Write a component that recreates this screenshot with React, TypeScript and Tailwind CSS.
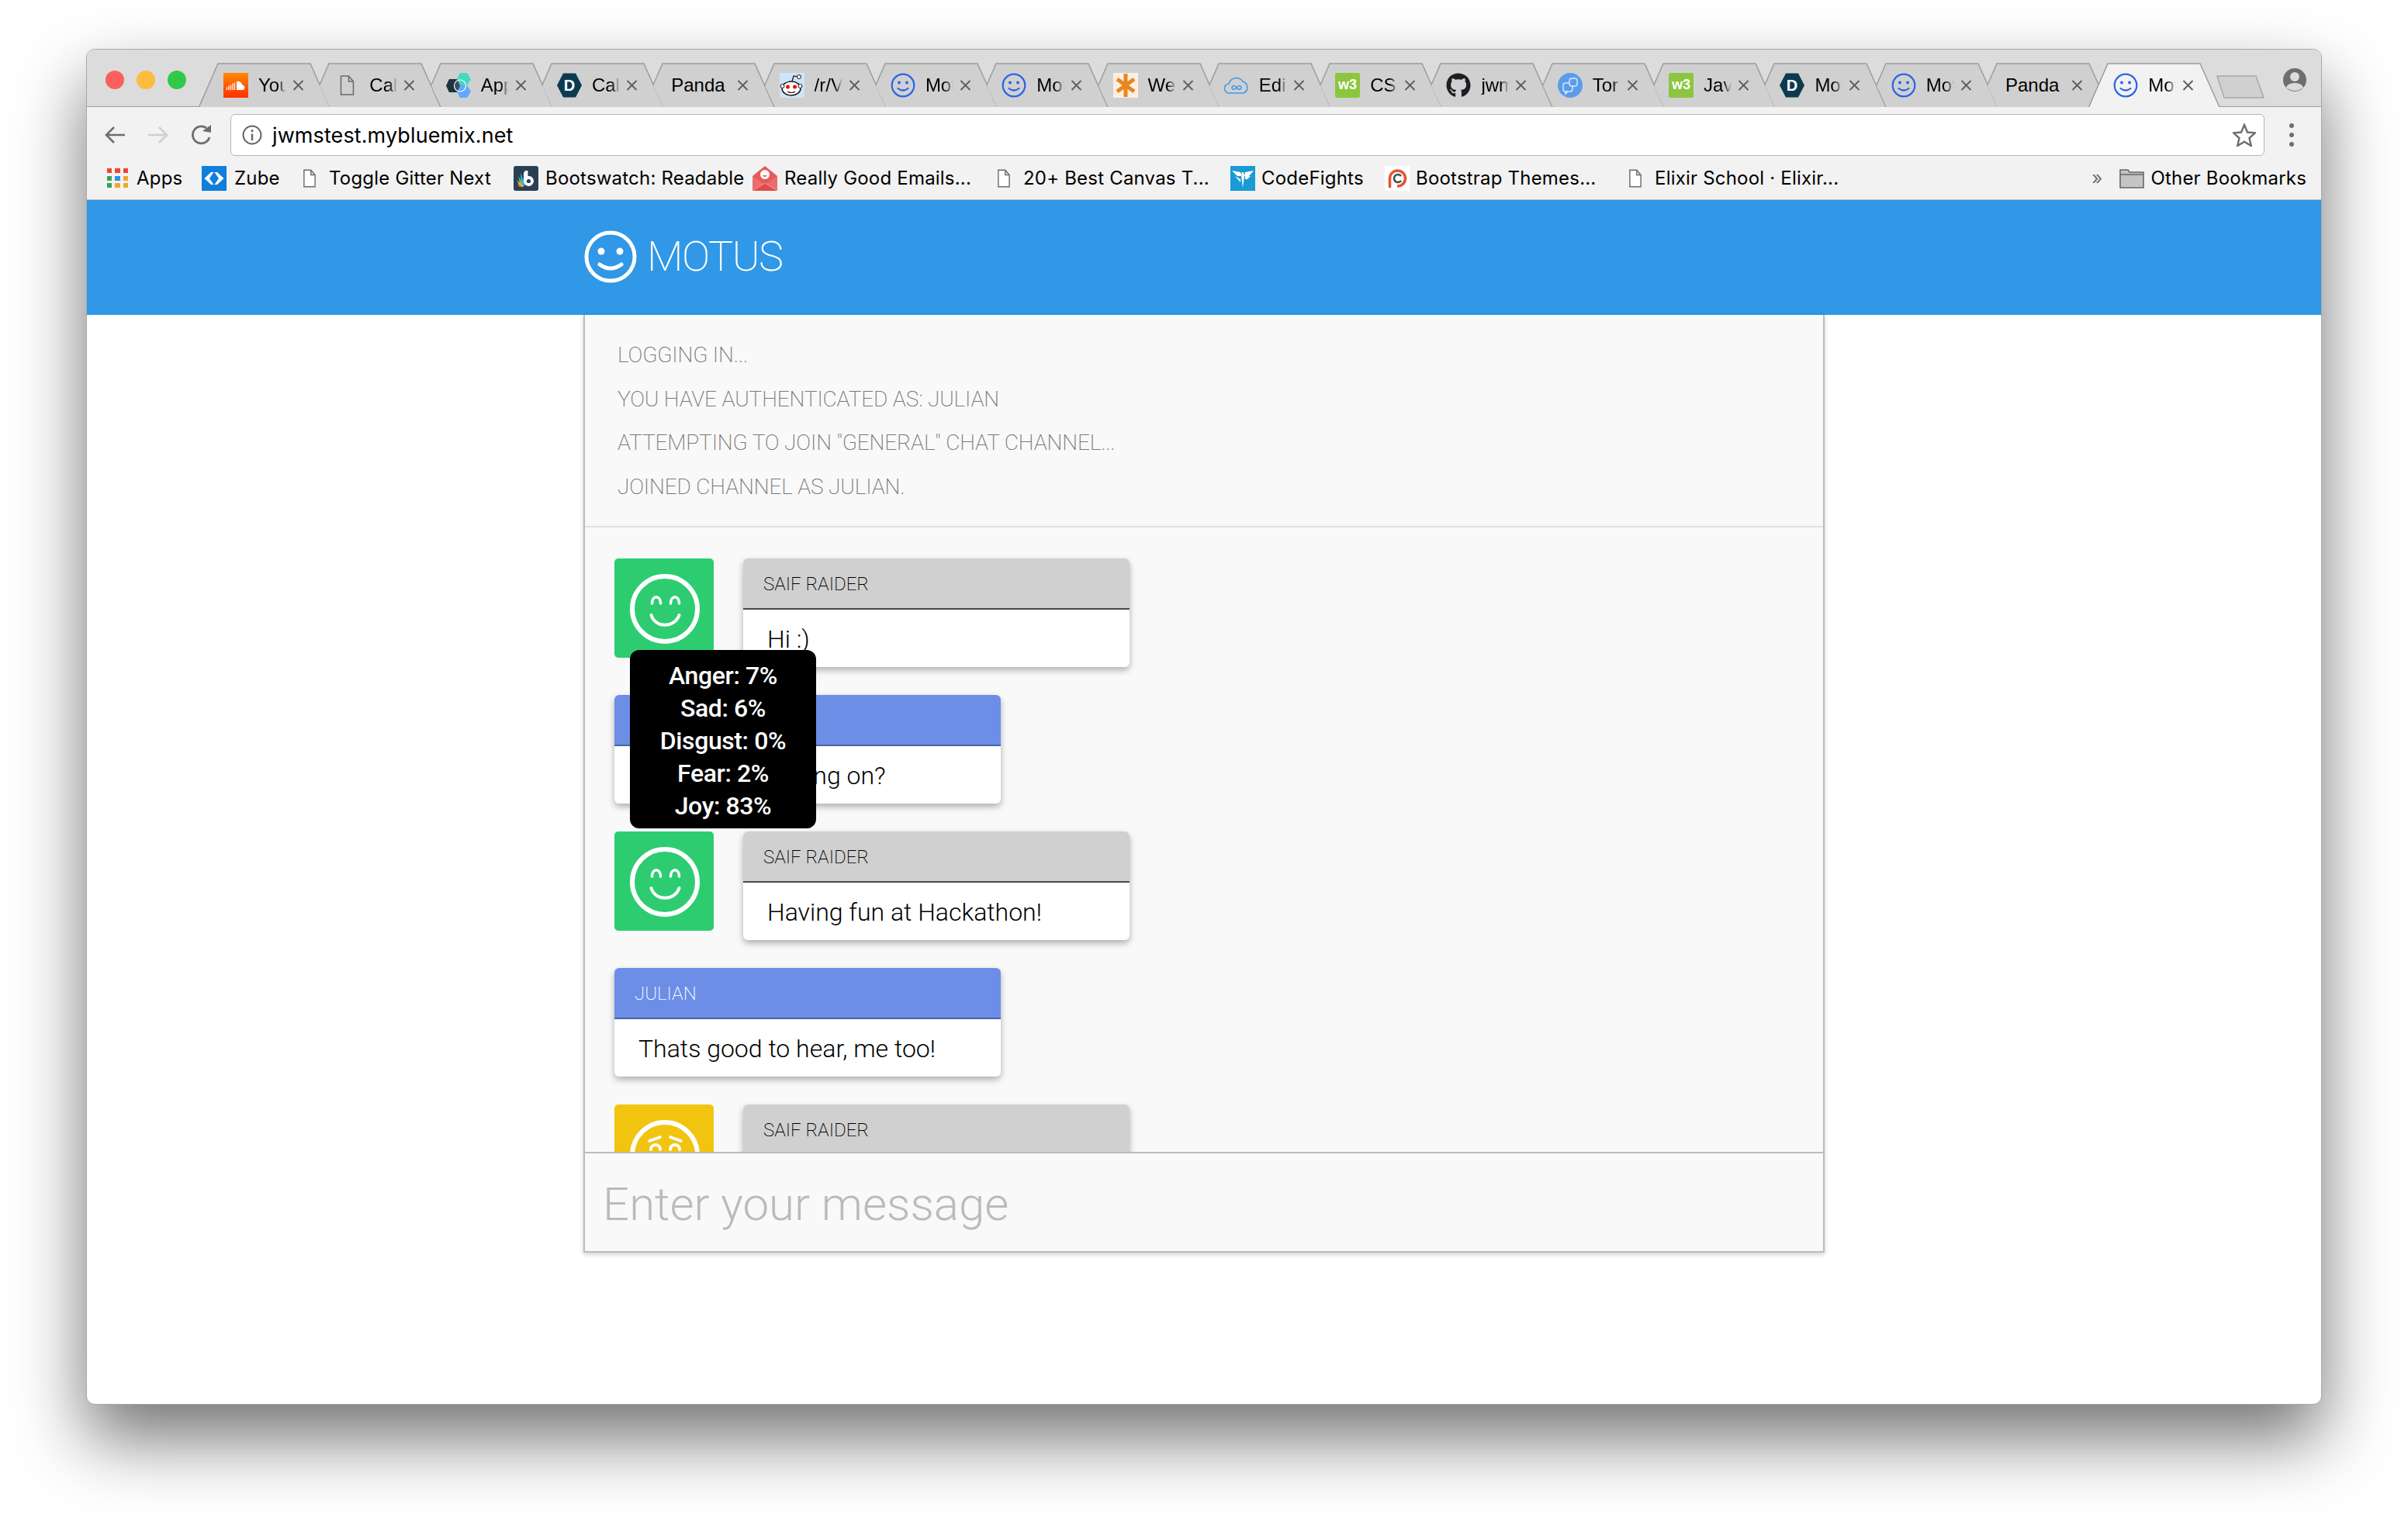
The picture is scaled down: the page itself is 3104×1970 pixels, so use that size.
import React from "react";
import { FaGithub } from "react-icons/fa";

const S = ({ children, className = "w-8 h-8" }: { children: React.ReactNode; className?: string }) => (
  <svg viewBox="0 0 32 32" className={`${className} shrink-0`}>{children}</svg>
);

const PageIcon = ({ light }: { light?: boolean }) => (
  <svg viewBox="0 0 18 26" className={light ? "w-[16px] h-[26px] shrink-0" : "w-[19px] h-[26px] shrink-0"}>
    <path d="M1 1H11L17 8V25H1Z M11 1V8H17" fill={light ? "#fff" : "none"} stroke="#6b6b6b" strokeWidth="1.600" />
  </svg>
);

const Sound = () => (
  <S>
    <defs>
      <linearGradient id="sc" x1="0" y1="0" x2="0" y2="1">
        <stop offset="0" stopColor="#ff8a00" />
        <stop offset="1" stopColor="#ff2f00" />
      </linearGradient>
    </defs>
    <rect width="32" height="32" fill="url(#sc)" />
    <path d="M17 11a6 6 0 0 1 7.500 4.600A3.400 3.400 0 0 1 25.500 22H17Z" fill="#fff" />
    <path d="M4.500 18.500V22M7 16.500V22M9.500 15.500V22M12 13.500V22M14.500 12.500V22" stroke="#fff" strokeWidth="1.300" />
  </S>
);
const Hexes = () => (
  <S>
    <path d="M4 8H14L18 16.500L14 25H4L0 16.500Z" fill="#1d3340" />
    <path d="M18 0H27L32 8L27 16H18L14 8Z" fill="#44d8c0" />
    <path d="M18 16H27L32 24L27 32H18L14 24Z" fill="#5fa8ff" />
    <path d="M14 8L18 16.500L14 25L10 16.500Z" fill="#39505c" />
    <circle cx="18" cy="16.500" r="7.500" fill="none" stroke="#fff" strokeWidth="1.200" />
  </S>
);
const DHex = () => (
  <S>
    <path d="M8 0.500H24L32 16L24 31.500H8L0 16Z" fill="#0c3b50" />
    <text x="16" y="23" textAnchor="middle" fontSize="20" fontWeight="700" fill="#fff" fontFamily="Liberation Sans">D</text>
  </S>
);
const Reddit = () => (
  <S>
    <rect width="32" height="32" fill="#cfe4f7" />
    <ellipse cx="15" cy="20" rx="12" ry="9" fill="#fff" stroke="#111" strokeWidth="1.400" />
    <circle cx="3.500" cy="17" r="2.500" fill="#fff" stroke="#111" />
    <circle cx="26.500" cy="17" r="2.500" fill="#fff" stroke="#111" />
    <circle cx="10.500" cy="18" r="2.500" fill="#e8120c" />
    <circle cx="19.500" cy="18" r="2.500" fill="#e8120c" />
    <path d="M10 24q5 3 10 0" fill="none" stroke="#111" strokeWidth="1.200" />
    <path d="M16 11l2-7 6 1" fill="none" stroke="#111" strokeWidth="1.200" />
    <circle cx="25" cy="5" r="2.500" fill="#fff" stroke="#111" />
  </S>
);
const Motus = () => (
  <S>
    <circle cx="16" cy="16" r="14.300" fill="none" stroke="#2a63e6" strokeWidth="2.200" />
    <circle cx="11" cy="12.500" r="1.900" fill="#2a63e6" />
    <circle cx="21" cy="12.500" r="1.900" fill="#2a63e6" />
    <path d="M9.500 20q6.500 5 13 0" fill="none" stroke="#2a63e6" strokeWidth="2.200" strokeLinecap="round" />
  </S>
);
const Star = () => (
  <S>
    <rect width="32" height="32" fill="#fcefe2" />
    <path d="M16 1V31M5 8L27 24M27 8L5 24" stroke="#e6881f" strokeWidth="5" />
  </S>
);
const CloudInf = () => (
  <S>
    <path d="M7 26a6 6 0 0 1-1-12 10 10 0 0 1 18-3 8 8 0 0 1 1 15Z" fill="none" stroke="#3d9be9" strokeWidth="1.600" />
    <path d="M16 19c-2-3-6-3-6 0s4 3 6 0c2-3 6-3 6 0s-4 3-6 0Z" fill="none" stroke="#3d9be9" strokeWidth="1.500" />
  </S>
);
const W3 = () => (
  <S>
    <rect width="32" height="32" rx="2" fill="#8cc63f" />
    <text x="16" y="21" textAnchor="middle" fontSize="18" fontWeight="700" fill="#fff" fontFamily="Liberation Sans">w3</text>
  </S>
);
const Tor = () => (
  <S>
    <circle cx="16" cy="16" r="16" fill="#5b9bec" />
    <rect x="7" y="13" width="12" height="11" rx="3" fill="none" stroke="#dcebfb" strokeWidth="1.400" />
    <rect x="15" y="7" width="10" height="10" rx="3" fill="#5b9bec" stroke="#dcebfb" strokeWidth="1.400" />
    <path d="M10 24v3l3-3" fill="none" stroke="#dcebfb" strokeWidth="1.400" />
  </S>
);
const Grid = () => (
  <div className="grid grid-cols-3 gap-x-[4px] gap-y-[3.500px] w-[27px] shrink-0">
    {["bg-[#f44336]", "bg-[#f44336]", "bg-[#f44336]", "bg-[#38a15c]", "bg-[#2f8ff0]", "bg-[#f4a52c]", "bg-[#38a15c]", "bg-[#f4a52c]", "bg-[#f4a52c]"].map((c, i) => (
      <div key={i} className={`${c} h-[6px]`} />
    ))}
  </div>
);
const Zube = () => (
  <S>
    <rect width="32" height="32" fill="#0f7fdb" />
    <path d="M3.500 16L12 8H15.500L10 16L15.500 24H12Z" fill="#fff" />
    <path d="M28.500 16L20 8H16.500L22 16L16.500 24H20Z" fill="#fff" />
  </S>
);
const Boots = () => (
  <S>
    <rect width="32" height="32" rx="3" fill="#2a3f54" />
    <path d="M9 9L15 24L10 27Z" fill="#34b3e0" />
    <path d="M6 13L14 26L9 27Z" fill="#5cc46a" />
    <path d="M4.500 18L13 27H8Z" fill="#f4b43c" />
    <path d="M4.500 22L11 27H7Z" fill="#e8563f" />
    <path d="M15 6H18.500V13A6.500 6.500 0 1 1 13 19.500V9Z" fill="#fff" />
    <circle cx="19.500" cy="19.500" r="2.600" fill="#2a3f54" />
  </S>
);
const Emails = () => (
  <S>
    <path d="M16 0L32 13V32H0V13Z" fill="#e6595c" />
    <path d="M0 13V32H32V13L16 24Z" fill="#ea6d6d" />
    <path d="M0 32L16 22L32 32" fill="#e04b4b" stroke="#f5a5a5" strokeWidth="0.800" />
    <circle cx="16" cy="11" r="6" fill="#fff" />
    <path d="M13 12q3 4 6 0Z" fill="#e6595c" />
  </S>
);
const Fights = () => (
  <S>
    <rect width="32" height="32" fill="#1a9ad6" />
    <path d="M2 6L13 8L15 13H9Z M30 6L19 8L18 13H24Z M14 13L16 28L18 13L17 8H15Z M6 13L13 17V21Z M26 13H19V17H22Z" fill="#fff" />
  </S>
);
const Themes = () => (
  <S>
    <rect width="32" height="32" fill="#fff" />
    <path d="M6.500 28V16a10 10 0 1 1 9.500 10" fill="none" stroke="#e8532c" strokeWidth="3.500" />
    <path d="M21 13a5 5 0 1 0 0 6" fill="none" stroke="#3d4f5c" strokeWidth="2.600" />
  </S>
);

type Tab = { label: string; icon?: React.ReactNode; active?: boolean };
const tabs: Tab[] = [
  { label: "You", icon: <Sound /> },
  { label: "Cal", icon: <div className="w-8 flex justify-center"><PageIcon /></div> },
  { label: "App", icon: <Hexes /> },
  { label: "Cal", icon: <DHex /> },
  { label: "Panda" },
  { label: "/r/V", icon: <Reddit /> },
  { label: "Mot", icon: <Motus /> },
  { label: "Mot", icon: <Motus /> },
  { label: "We", icon: <Star /> },
  { label: "Edi", icon: <CloudInf /> },
  { label: "CSS", icon: <W3 /> },
  { label: "jwm", icon: <FaGithub className="w-8 h-8 shrink-0 text-[#1b1f23]" /> },
  { label: "Tor", icon: <Tor /> },
  { label: "Jav", icon: <W3 /> },
  { label: "Mot", icon: <DHex /> },
  { label: "Mot", icon: <Motus /> },
  { label: "Panda" },
  { label: "Mot", icon: <Motus />, active: true },
];

const TabItem = ({ tab, first }: { tab: Tab; first: boolean }) => {
  const full = first || tab.active;
  const fill = full ? "M0.500 57L25 1H144L169 57Z" : "M12.800 29L25 1H144L169 57H25.700Z";
  const stroke = full ? "M0.500 57L25 1H144L169 57" : "M12.800 29L25 1H144L169 57";
  return (
    <div className={`relative w-[169px] h-[57px] shrink-0 not-first:-ml-[25.700px] ${tab.active ? "z-10" : ""}`}>
      <svg viewBox="0 0 169 57" className="absolute inset-0 w-full h-full">
        <path d={fill} fill={tab.active ? "#f2f2f2" : "#d0d0d0"} />
        <path d={stroke} fill="none" stroke="#9c9c9c" strokeWidth="1.500" />
      </svg>
      <div className={`relative h-full flex items-center text-[24px] leading-none text-black ${tab.icon ? "pl-[32px]" : "pl-[36px]"}`}>
        {tab.icon}
        <span className={`overflow-hidden whitespace-nowrap ${tab.icon ? "ml-[13px] w-[36px] [mask-image:linear-gradient(to_right,black_70%,transparent)]" : "w-[77px]"}`}>
          {tab.label}
        </span>
        <svg viewBox="0 0 14 14" className="w-[15px] h-[14px] ml-[8px] shrink-0">
          <path d="M1 1L13 13M13 1L1 13" stroke="#5c5c5c" strokeWidth="1.800" />
        </svg>
      </div>
    </div>
  );
};

const marks: { label: string; icon: React.ReactNode; w: string; gap: string }[] = [
  { label: "Apps", icon: <Grid />, w: "w-[122px]", gap: "gap-[11px]" },
  { label: "Zube", icon: <Zube />, w: "w-[131px]", gap: "gap-[10px]" },
  { label: "Toggle Gitter Next", icon: <PageIcon light />, w: "w-[271px]", gap: "gap-[17px]" },
  { label: "Bootswatch: Readable", icon: <Boots />, w: "w-[308px]", gap: "gap-[9px]" },
  { label: "Really Good Emails...", icon: <Emails />, w: "w-[316px]", gap: "gap-[9px]" },
  { label: "20+ Best Canvas T...", icon: <PageIcon light />, w: "w-[300px]", gap: "gap-[17px]" },
  { label: "CodeFights", icon: <Fights />, w: "w-[199px]", gap: "gap-[8px]" },
  { label: "Bootstrap Themes...", icon: <Themes />, w: "w-[315px]", gap: "gap-[8px]" },
];

const Face = ({ kind }: { kind: "joy" | "worry" }) => (
  <svg viewBox="0 0 128 128" className="w-[128px] h-[128px]">
    <circle cx="65" cy="65" r="42" fill="none" stroke="#fff" strokeWidth="6" />
    {kind === "joy" ? (
      <>
        <path d="M48.500 58c0-11 11-11 11 0M72.500 58c0-11 11-11 11 0" fill="none" stroke="#fff" strokeWidth="3.500" strokeLinecap="round" />
        <path d="M47.500 73c5 17 30 17 36 0" fill="none" stroke="#fff" strokeWidth="4" strokeLinecap="round" />
      </>
    ) : (
      <>
        <path d="M45 47L59 42M86 47L72 42" fill="none" stroke="#fff" strokeWidth="3.500" strokeLinecap="round" />
        <path d="M47 58a6 6 0 0 1 12 0M72 58a6 6 0 0 1 12 0" fill="none" stroke="#fff" strokeWidth="4" strokeLinecap="round" />
      </>
    )}
  </svg>
);

const Card = ({ user, text, me }: { user: string; text: string; me?: boolean }) => (
  <div className="w-[498px] h-[140px] shrink-0 rounded-[6px] overflow-hidden bg-white shadow-[0_4px_8px_rgba(0,0,0,0.3)]">
    <div className={`h-[66px] flex items-center pl-[26px] pt-[2px] border-b-2 text-[24px] font-extralight ${me ? "bg-[#6c8ee6] border-[#4c64a8] text-white" : "bg-[#d0d0d0] border-[#4a4a4a] text-black"}`}>
      {user}
    </div>
    <div className="h-[74px] flex items-center pl-[31px] pt-[2px] text-[32px] font-light text-black">{text}</div>
  </div>
);

const Row = ({ face, text, color, children }: { face: "joy" | "worry"; text: string; color: string; children?: React.ReactNode }) => (
  <div className="relative flex gap-[38px] shrink-0">
    <div className={`w-[128px] h-[128px] rounded-[5px] shrink-0 ${color}`}>
      <Face kind={face} />
    </div>
    <Card user="SAIF RAIDER" text={text} />
    {children}
  </div>
);

export default function App() {
  return (
    <div className="h-[1970px] w-[3104px] bg-white overflow-hidden pt-[63px] pl-[111px] font-['Liberation_Sans',sans-serif]">
      <div className="w-[2882px] h-[1748px] rounded-[11px] bg-white border border-[#a8a8a8] flex flex-col overflow-hidden shadow-[0_44px_90px_rgba(0,0,0,0.55)]">
        {/* tab strip */}
        <div className="relative h-[74px] shrink-0 bg-[#dcdcdc] flex items-end border-b border-[#a0a0a0] pl-[144px]">
          <div className="absolute left-[24px] top-[27px] flex gap-[16px]">
            <div className="w-[24px] h-[24px] rounded-full bg-[#fc605c]" />
            <div className="w-[24px] h-[24px] rounded-full bg-[#fdbc40]" />
            <div className="w-[24px] h-[24px] rounded-full bg-[#34c84a]" />
          </div>
          <div className="flex -mb-px">
            {tabs.map((t, i) => (
              <TabItem key={i} tab={t} first={i === 0} />
            ))}
          </div>
          <svg viewBox="0 0 64 32" className="w-[64px] h-[32px] -ml-[5px] mb-[9px] shrink-0">
            <path d="M2 2H52L62 30H11Z" fill="#d0d0d0" stroke="#a8a8a8" strokeWidth="1.500" strokeLinejoin="round" />
          </svg>
          <svg viewBox="0 0 30 32" className="absolute left-[2831px] top-[23px] w-[30px] h-[32px]">
            <circle cx="15" cy="16" r="15" fill="#6e6e6e" />
            <circle cx="15" cy="12" r="6" fill="#dcdcdc" />
            <path d="M4 26c2-8 20-8 22 0q-11 8-22 0Z" fill="#dcdcdc" />
          </svg>
        </div>

        {/* address row */}
        <div className="h-[66px] shrink-0 bg-[#f2f2f2] flex items-center relative pt-[6px]">
          <svg viewBox="0 0 28 28" className="w-[28px] h-[28px] ml-[22px] shrink-0">
            <path d="M27 14H3M13 4L3 14L13 24" fill="none" stroke="#6e6e6e" strokeWidth="2.600" />
          </svg>
          <svg viewBox="0 0 28 28" className="w-[28px] h-[28px] ml-[28px] shrink-0">
            <path d="M1 14H25M15 4L25 14L15 24" fill="none" stroke="#cfcfcf" strokeWidth="2.600" />
          </svg>
          <svg viewBox="0 0 28 28" className="w-[28px] h-[28px] ml-[28px] shrink-0">
            <path d="M24 17A11 11 0 1 1 20 5" fill="none" stroke="#6e6e6e" strokeWidth="2.800" />
            <path d="M15 9L26 11V1Z" fill="#6e6e6e" />
          </svg>
          <div className="ml-[23px] h-[54px] w-[2622px] rounded-[6px] bg-white border border-[#b5b5b5] flex items-center shrink-0">
            <svg viewBox="0 0 26 26" className="w-[26px] h-[26px] ml-[14px] shrink-0">
              <circle cx="13" cy="13" r="11.500" fill="none" stroke="#666" strokeWidth="2" />
              <path d="M13 11.500V20" stroke="#666" strokeWidth="2.400" />
              <circle cx="13" cy="7.500" r="1.600" fill="#666" />
            </svg>
            <span className="ml-[13px] text-[27px] tracking-[0.100px] leading-none text-black flex-1 font-['Inter',sans-serif]">jwmstest.mybluemix.net</span>
            <svg viewBox="0 0 30 30" className="w-[30px] h-[30px] mr-[10px] shrink-0">
              <path d="M15 2L19 11.500L29 12.300L21.500 19L23.800 29L15 23.700L6.200 29L8.500 19L1 12.300L11 11.500Z" fill="none" stroke="#6e6e6e" strokeWidth="2.400" />
            </svg>
          </div>
          <div className="ml-[32px] flex flex-col gap-[6px]">
            <div className="w-[6px] h-[6px] rounded-full bg-[#6e6e6e]" />
            <div className="w-[6px] h-[6px] rounded-full bg-[#6e6e6e]" />
            <div className="w-[6px] h-[6px] rounded-full bg-[#6e6e6e]" />
          </div>
        </div>

        {/* bookmarks */}
        <div className="h-[54px] shrink-0 bg-[#f2f2f2] border-b border-[#b8b8b8] flex items-center pb-[2px] pl-[26px] text-[24px] leading-none tracking-[0.200px] text-black whitespace-nowrap font-['Inter',sans-serif]">
          {marks.map((m) => (
            <div key={m.label} className={`flex items-center shrink-0 ${m.w} ${m.gap}`}>
              {m.icon}
              <span>{m.label}</span>
            </div>
          ))}
          <div className="flex items-center gap-[17px] flex-1">
            <PageIcon light />
            <span>Elixir School · Elixir...</span>
          </div>
          <span className="text-[#6e6e6e] mr-[22px]">»</span>
          <svg viewBox="0 0 32 26" className="w-[32px] h-[26px] mr-[8px] shrink-0">
            <path d="M1 25V2H11L13 5H31V25Z" fill="#c4c4c4" stroke="#666" strokeWidth="1.600" />
            <path d="M1 8H31" stroke="#666" strokeWidth="1.600" />
          </svg>
          <span className="mr-[19px]">Other Bookmarks</span>
        </div>

        {/* page */}
        <div className="flex-1 min-h-0 flex flex-col font-['Roboto',sans-serif]">
          <div className="h-[148px] shrink-0 bg-[#3098e6]">
            <div className="w-[1600px] h-full mx-auto flex items-center gap-[13px] pb-[2px] pl-[1px]">
              <svg viewBox="0 0 68 68" className="w-[68px] h-[68px] shrink-0">
                <circle cx="34" cy="34" r="31" fill="none" stroke="#fff" strokeWidth="5" />
                <circle cx="22" cy="27" r="4.500" fill="#fff" />
                <circle cx="46" cy="27" r="4.500" fill="#fff" />
                <path d="M20 44q14 10 28 0" fill="none" stroke="#fff" strokeWidth="5" strokeLinecap="round" />
              </svg>
              <span className="text-[54px] leading-none font-extralight tracking-[-1.500px] text-white">MOTUS</span>
            </div>
          </div>

          <div className="w-[1600px] h-[1209px] shrink-0 mx-auto bg-[#f9f9f9] border-x-2 border-b-2 border-[#bbbbbb] flex flex-col shadow-[0_2px_6px_rgba(0,0,0,0.2)]">
            <div className="h-[274px] shrink-0 border-b-2 border-[#e0e0e0] pt-[24px] pl-[42px] text-[28px] leading-[56.500px] font-extralight tracking-[-0.150px] text-[#777777]">
              <div>LOGGING IN...</div>
              <div>YOU HAVE AUTHENTICATED AS: JULIAN</div>
              <div>ATTEMPTING TO JOIN "GENERAL" CHAT CHANNEL...</div>
              <div>JOINED CHANNEL AS JULIAN.</div>
            </div>

            <div className="flex-1 min-h-0 overflow-hidden pt-[40px] pl-[38px] flex flex-col gap-[36px]">
              <Row face="joy" text="Hi :)" color="bg-[#2ecc71]">
                <div className="absolute z-10 left-[20px] top-[118px] w-[240px] h-[230px] rounded-[12px] bg-black text-white text-[32px] leading-[42px] font-medium tracking-[-0.400px] text-center pt-[12px]">
                  <div>Anger: 7%</div>
                  <div>Sad: 6%</div>
                  <div>Disgust: 0%</div>
                  <div>Fear: 2%</div>
                  <div>Joy: 83%</div>
                </div>
              </Row>
              <Card me user="JULIAN" text="Heya, what's going on?" />
              <Row face="joy" text="Having fun at Hackathon!" color="bg-[#2ecc71]" />
              <Card me user="JULIAN" text="Thats good to hear, me too!" />
              <Row face="worry" text="" color="bg-[#f1c40f]" />
            </div>

            <div className="h-[128px] shrink-0 border-t-2 border-[#bbbbbb] flex items-center pl-[23px] pt-[5px] text-[60px] leading-none font-light text-[#bbbbbb]">
              Enter your message
            </div>
          </div>
        </div>
      </div>
    </div>
  );
}
